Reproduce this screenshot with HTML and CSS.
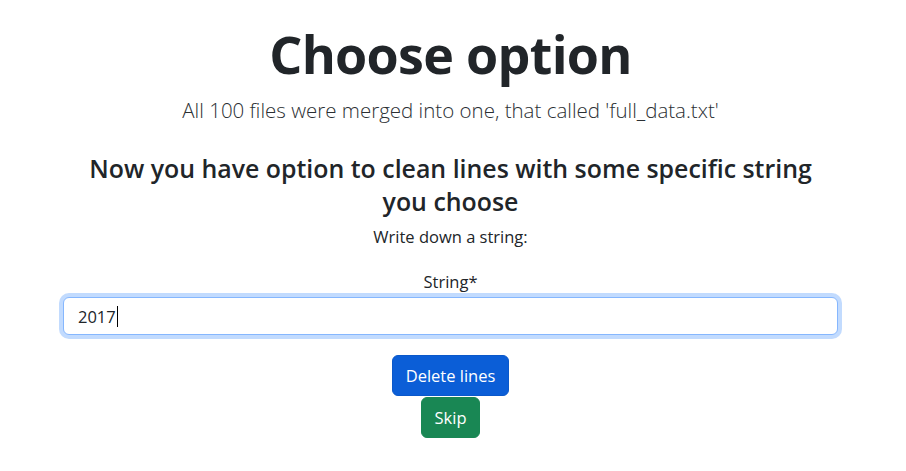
FILE: index.html
```html
<!DOCTYPE html>
<html lang="en">
<head>
<meta charset="utf-8">
<title>Choose option</title>
<link rel="stylesheet" href="styles.css">
</head>
<body>
<main class="page">
  <h1 class="title">Choose option</h1>
  <p class="lead">All 100 files were merged into one, that called 'full_data.txt'</p>
  <h3 class="question">Now you have option to clean lines with some specific string you choose</h3>
  <p class="hint">Write down a string:</p>
  <form class="form">
    <label class="label" for="str">String*</label>
    <div class="field">
      <input id="str" class="control" type="text" value="2017">
      <span class="caret"></span>
    </div>
    <div class="actions">
      <button type="button" class="btn btn-primary">Delete lines</button>
      <button type="button" class="btn btn-success">Skip</button>
    </div>
  </form>
</main>
</body>
</html>
```
FILE: styles.css
```css
* { box-sizing: border-box; }
body {
  margin: 0;
  font-family: "Open Sans", "Noto Sans", sans-serif;
  color: #212529;
  background: #fff;
}
.page {
  width: 901px;
  text-align: center;
  padding-top: 20px;
}
.title {
  margin: 0;
  font-size: 52px;
  font-weight: 700;
  line-height: 1.2;
  letter-spacing: -0.7px;
  padding-top: 3px;
}
.lead {
  margin: 10px 0 0;
  font-size: 20.5px;
  font-weight: 300;
  line-height: 30px;
  color: #2b2f33;
}
.question {
  width: 740px;
  margin: 27px auto 0;
  font-size: 24.9px;
  font-weight: 600;
  line-height: 33px;
}
.hint {
  margin: 7px 0 0;
  font-size: 16.5px;
  line-height: 24px;
}
.form {
  padding: 0 63px;
}
.label {
  display: block;
  margin-top: 21px;
  font-size: 16.5px;
  line-height: 24px;
}
.field {
  position: relative;
  margin-top: 3px;
}
.control {
  display: block;
  width: 100%;
  height: 38px;
  padding: 6px 14px;
  font-family: inherit;
  font-size: 16.5px;
  color: #212529;
  border: 1px solid #86b7fe;
  border-radius: 6px;
  outline: none;
  box-shadow: 0 0 0 4px rgba(13, 110, 253, 0.25);
}
.caret {
  position: absolute;
  left: 54px;
  top: 9px;
  width: 1px;
  height: 21px;
  background: #000;
}
.actions {
  display: flex;
  flex-direction: column;
  align-items: center;
  gap: 1px;
  margin-top: 20px;
}
.btn {
  height: 41px;
  padding: 0 13px;
  font-family: inherit;
  font-size: 16.5px;
  line-height: 39px;
  color: #fff;
  border: 1px solid transparent;
  border-radius: 6px;
}
.btn-primary { background: #0b5ed7; border-color: #0a58ca; }
.btn-success { background: #198754; border-color: #198754; }
```
